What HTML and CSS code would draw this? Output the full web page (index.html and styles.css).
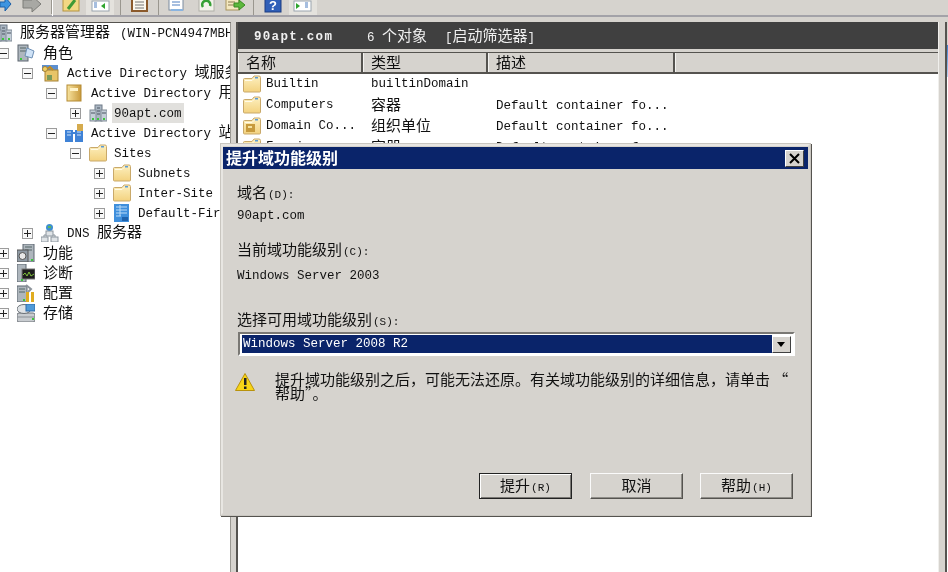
FILE: index.html
```html
<!DOCTYPE html>
<html lang="zh">
<head>
<meta charset="utf-8">
<title>服务器管理器</title>
<link rel="stylesheet" href="styles.css">
</head>
<body>
<svg class="defs" width="0" height="0" aria-hidden="true">
  <defs>
    <linearGradient id="fy" x1="0" y1="0" x2="0" y2="1"><stop offset="0" stop-color="#fdf0c0"/><stop offset="1" stop-color="#f3d27f"/></linearGradient>
    <linearGradient id="bk" x1="0" y1="0" x2="1" y2="0"><stop offset="0" stop-color="#f8e4a0"/><stop offset="1" stop-color="#c99a3c"/></linearGradient>
    <symbol id="folder" viewBox="0 0 18 18"><path d="M.5 4.500q0-1 1-1h7.500l2-2.500h5q1.500 0 1.500 1.500v13.500q0 1-1 1h-15q-1 0-1-1z" fill="url(#fy)" stroke="#c9a96a"/><path d="M2 5.500h7l2-2" fill="none" stroke="#fffbe8"/><rect x="12" y="2" width="3" height="1.500" fill="#5b9bd5"/></symbol>
    <symbol id="ou" viewBox="0 0 18 18"><use href="#folder"/><rect x="3" y="7" width="9" height="8" fill="#c79a3c"/><rect x="5" y="9" width="4" height="2" fill="#f5e3a0"/></symbol>
    <symbol id="server" viewBox="0 0 18 18"><rect x="6" y="1" width="7" height="16" fill="#aab6c2" stroke="#6f7b88"/><rect x="1" y="6" width="6" height="11" fill="#c4ced8" stroke="#808b96"/><rect x="12" y="6" width="6" height="11" fill="#c4ced8" stroke="#808b96"/><path d="M8 4h3M8 7h3M8 10h3M2 9h4M13 9h4" stroke="#4a5560"/><rect x="3" y="14" width="2" height="2" fill="#3cc63c"/><rect x="14" y="14" width="2" height="2" fill="#3cc63c"/><rect x="8" y="14" width="2" height="2" fill="#3cc63c"/></symbol>
    <symbol id="roles" viewBox="0 0 18 18"><rect x="1" y="1" width="10" height="16" fill="#aeb6bd" stroke="#5c6670"/><path d="M3 4h6M3 7h6" stroke="#566"/><rect x="3" y="14" width="2" height="2" fill="#3cc63c"/><path d="M10 4l7 3-2 7-7-2z" fill="#cfe2f6" stroke="#6d8fb5"/></symbol>
    <symbol id="adds" viewBox="0 0 18 18"><rect x="1" y="1" width="16" height="6" fill="#5c8fd0"/><rect x="4" y="6" width="13" height="11" fill="#e8c468" stroke="#a58234"/><path d="M3 7l6-4 3 3" fill="none" stroke="#c08a20" stroke-width="2"/><circle cx="4" cy="5" r="2.500" fill="#f2cf63" stroke="#a58234"/><rect x="6" y="11" width="5" height="5" fill="#7a9a5a"/></symbol>
    <symbol id="book" viewBox="0 0 18 18"><rect x="2" y="1" width="14" height="16" fill="url(#bk)" stroke="#b48a32"/><rect x="5" y="4" width="8" height="3" fill="#fff3c8"/></symbol>
    <symbol id="sites" viewBox="0 0 18 18"><rect x="0" y="6" width="8" height="12" fill="#3f82d6"/><rect x="10" y="6" width="8" height="12" fill="#3f82d6"/><path d="M2 8h4M2 11h4M12 8h4M12 11h4" stroke="#cfe3fa"/><path d="M8 9h2" stroke="#3f82d6" stroke-width="2"/><rect x="12" y="0" width="6" height="7" fill="#d5ab4e"/></symbol>
    <symbol id="bldg" viewBox="0 0 18 18"><rect x="1" y="0" width="15" height="18" fill="#3f8fdc"/><path d="M3 3h11M3 6h11M3 9h11M3 12h5" stroke="#bcdcf8"/><path d="M7 1v11" stroke="#bcdcf8"/><rect x="9" y="13" width="6" height="4" fill="#1f62ac"/></symbol>
    <symbol id="dns" viewBox="0 0 18 18"><circle cx="8.500" cy="3.500" r="3.500" fill="#3f8fd0"/><path d="M7 2h3v2H7z" fill="#5cb85c"/><path d="M8.500 7v4M3 13v-2h11v2" fill="none" stroke="#8b959e"/><rect x="5" y="7" width="7" height="5" fill="#dfe3e6" stroke="#8b959e"/><rect x="0" y="13" width="7" height="5" fill="#dfe3e6" stroke="#8b959e"/><rect x="10" y="13" width="7" height="5" fill="#dfe3e6" stroke="#8b959e"/></symbol>
    <symbol id="feat" viewBox="0 0 18 18"><rect x="6" y="0" width="11" height="18" fill="#aeb6bd" stroke="#5c6670"/><path d="M8 3h7M8 6h7" stroke="#566"/><rect x="0" y="6" width="11" height="12" fill="#8f9aa4" stroke="#555"/><circle cx="5.500" cy="12" r="3.500" fill="#e8e8e8" stroke="#555"/><rect x="14" y="15" width="2" height="2" fill="#3cc63c"/></symbol>
    <symbol id="diag" viewBox="0 0 18 18"><rect x="0" y="0" width="9" height="18" fill="#aeb6bd" stroke="#5c6670"/><rect x="5" y="5" width="13" height="10" fill="#1d1d1d" stroke="#777"/><path d="M6 11l2-2 2 3 2-4 2 4 3-2" fill="none" stroke="#7fc03c"/><rect x="4" y="15" width="2" height="2" fill="#3cc63c"/></symbol>
    <symbol id="conf" viewBox="0 0 18 18"><rect x="0" y="2" width="10" height="16" fill="#aeb6bd" stroke="#5c6670"/><path d="M2 5h6M2 8h6" stroke="#566"/><path d="M9 1l5 4-3 3" fill="none" stroke="#8e959c" stroke-width="2"/><rect x="9" y="8" width="3" height="10" fill="#e0ac20"/><rect x="14" y="8" width="3" height="10" fill="#e0ac20"/><rect x="6" y="15" width="2" height="2" fill="#3cc63c"/></symbol>
    <symbol id="stor" viewBox="0 0 18 18"><rect x="0" y="9" width="18" height="9" rx="2" fill="#c8ccd0" stroke="#6c7278"/><ellipse cx="7" cy="5" rx="7" ry="4.500" fill="#dfe3e6" stroke="#6c7278"/><rect x="9" y="0" width="9" height="7" fill="#4f9ad8" stroke="#2e6aa8"/><path d="M0 13h18" stroke="#8a9096"/><rect x="15" y="14" width="2" height="2" fill="#3cc63c"/></symbol>
  </defs>
</svg>

<div class="app">
  <div class="toolbar">
    <svg class="strip" width="330" height="16" viewBox="0 0 330 16" aria-hidden="true">
      <path d="M0 2h5V-3l6 7-6 7V7H0z" fill="#3d94e0" stroke="#1c5ea6"/>
      <path d="M23 0h9v-4l9 8-9 8V8h-9z" fill="#a8a8a4" stroke="#7c7c78"/>
      <path d="M52.500 0v16" stroke="#fff"/><path d="M51.500 0v14" stroke="#9a978f"/>
      <rect x="63" y="-2" width="16" height="13" fill="#f2d883" stroke="#b59440"/><path d="M68 9l7-9" stroke="#3f9a35" stroke-width="3"/>
      <rect x="86" y="0" width="28" height="15" fill="#e4e2dd"/><rect x="92" y="1" width="17" height="10" fill="#fff" stroke="#9aa4ae"/><path d="M105 3v6l-4-3z" fill="#2fa52f"/><path d="M94 3h3M94 5h3M94 7h3" stroke="#4f7fc0"/>
      <path d="M120.500 0v15" stroke="#9a978f"/>
      <rect x="132" y="-2" width="15" height="13" fill="#fbf8ee" stroke="#8b5a2b" stroke-width="2"/><path d="M135 2h9M135 5h9M135 8h9" stroke="#777"/>
      <path d="M158.500 0v15" stroke="#9a978f"/>
      <rect x="169" y="-2" width="14" height="12" fill="#fff" stroke="#7b8ca0"/><path d="M172 2h8M172 5h8" stroke="#4f7fc0"/><rect x="171" y="9" width="12" height="2" fill="#8ab4e0"/>
      <rect x="199" y="-1" width="15" height="12" fill="#f2f2ea" stroke="#b0b0a8"/><path d="M203 7a4 4 0 1 1 7-1" fill="none" stroke="#35a035" stroke-width="2.500"/>
      <rect x="226" y="-2" width="13" height="12" fill="#f4e8c0" stroke="#a8935c"/><path d="M228 2h7M228 5h7" stroke="#8a7a50"/><path d="M234 3h5V0l6 5-6 5V7h-5z" fill="#5cb83c" stroke="#3a8a24"/>
      <path d="M253.500 0v15" stroke="#9a978f"/>
      <rect x="265" y="-3" width="16" height="15" fill="#2f5fb8" stroke="#1c3c80"/><text class="help" x="273" y="10">?</text>
      <rect x="289" y="0" width="28" height="15" fill="#e4e2dd"/><rect x="294" y="1" width="17" height="10" fill="#fff" stroke="#9aa4ae"/><path d="M296 3v6l4-3z" fill="#2fa52f"/><path d="M305 3h3M305 5h3M305 7h3" stroke="#4f7fc0"/>
    </svg>
  </div>

  <div class="main">
    <nav class="tree">
      <div class="row root"><svg class="ico"><use href="#server"/></svg><span class="lbl"><span class="c">服务器管理器</span><span class="host">(WIN-PCN4947MBH)</span></span></div>
      <div class="row l0"><span class="exp"></span><svg class="ico"><use href="#roles"/></svg><span class="lbl c">角色</span></div>
      <div class="row l1"><span class="exp"></span><svg class="ico"><use href="#adds"/></svg><span class="lbl">Active Directory <span class="c">域服务</span></span></div>
      <div class="row l2"><span class="exp"></span><svg class="ico"><use href="#book"/></svg><span class="lbl">Active Directory <span class="c">用户和计算机</span></span></div>
      <div class="row l3"><span class="exp plus"></span><svg class="ico"><use href="#server"/></svg><span class="lbl sel">90apt.com</span></div>
      <div class="row l2"><span class="exp"></span><svg class="ico"><use href="#sites"/></svg><span class="lbl">Active Directory <span class="c">站点和服务</span></span></div>
      <div class="row l3"><span class="exp"></span><svg class="ico"><use href="#folder"/></svg><span class="lbl lat">Sites</span></div>
      <div class="row l4"><span class="exp plus"></span><svg class="ico"><use href="#folder"/></svg><span class="lbl lat">Subnets</span></div>
      <div class="row l4"><span class="exp plus"></span><svg class="ico"><use href="#folder"/></svg><span class="lbl lat">Inter-Site Transports</span></div>
      <div class="row l4"><span class="exp plus"></span><svg class="ico"><use href="#bldg"/></svg><span class="lbl lat">Default-First-Site-Name</span></div>
      <div class="row l1"><span class="exp plus"></span><svg class="ico"><use href="#dns"/></svg><span class="lbl">DNS <span class="c">服务器</span></span></div>
      <div class="row l0"><span class="exp plus"></span><svg class="ico"><use href="#feat"/></svg><span class="lbl c">功能</span></div>
      <div class="row l0"><span class="exp plus"></span><svg class="ico"><use href="#diag"/></svg><span class="lbl c">诊断</span></div>
      <div class="row l0"><span class="exp plus"></span><svg class="ico"><use href="#conf"/></svg><span class="lbl c">配置</span></div>
      <div class="row l0"><span class="exp plus"></span><svg class="ico"><use href="#stor"/></svg><span class="lbl c">存储</span></div>
    </nav>

    <section class="content">
      <header class="banner"><b class="bname">90apt.com</b><span class="bcount">6 <span class="c">个对象</span></span><span class="bfilter">[<span class="c">启动筛选器</span>]</span></header>
      <div class="cols">
        <div class="col w1 c">名称</div><div class="col w2 c">类型</div><div class="col w3 c">描述</div><div class="col rest"></div>
      </div>
      <div class="list">
        <div class="item"><div class="cell w1"><svg class="ico"><use href="#folder"/></svg>Builtin</div><div class="cell w2 t">builtinDomain</div><div class="cell w3 t"></div></div>
        <div class="item"><div class="cell w1"><svg class="ico"><use href="#folder"/></svg>Computers</div><div class="cell w2 t c">容器</div><div class="cell w3 t">Default container fo...</div></div>
        <div class="item"><div class="cell w1"><svg class="ico"><use href="#ou"/></svg>Domain Co...</div><div class="cell w2 t c">组织单位</div><div class="cell w3 t">Default container fo...</div></div>
        <div class="item"><div class="cell w1"><svg class="ico"><use href="#folder"/></svg>Foreign...</div><div class="cell w2 t c">容器</div><div class="cell w3 t">Default container fo...</div></div>
      </div>
    </section>
    <div class="far"></div>
  </div>

  <div class="dialog" role="dialog">
    <div class="titlebar"><span class="ttl">提升域功能级别</span><span class="close"><svg width="11" height="11" viewBox="0 0 11 11"><path d="M1 1l9 9M10 1l-9 9" stroke="#000" stroke-width="2"/></svg></span></div>
    <div class="dbody">
      <div class="lab"><span class="c">域名</span><span class="p">(D):</span></div>
      <div class="val v1">90apt.com</div>
      <div class="lab gap1"><span class="c">当前域功能级别</span><span class="p">(C):</span></div>
      <div class="val v2">Windows Server 2003</div>
      <div class="lab gap2"><span class="c">选择可用域功能级别</span><span class="p">(S):</span></div>
      <div class="select"><span class="seltext">Windows Server 2008 R2</span><span class="arrow"></span></div>
      <div class="warn">
        <svg class="wicon" width="22" height="20" viewBox="0 0 22 20"><path d="M11 1.500L20.500 18.500H1.500z" fill="#f7d417" stroke="#b8920c" stroke-linejoin="round"/><rect x="10" y="6" width="2.500" height="7" fill="#222"/><rect x="10" y="14.500" width="2.500" height="2.500" fill="#222"/></svg>
        <p class="wtext c">提升域功能级别之后，可能无法还原。有关域功能级别的详细信息，请单击 “<br>帮助”。</p>
      </div>
      <div class="btns">
        <button class="btn def"><span class="c">提升</span><span class="p">(R)</span></button>
        <button class="btn b2"><span class="c">取消</span></button>
        <button class="btn"><span class="c">帮助</span><span class="p">(H)</span></button>
      </div>
    </div>
  </div>
</div>
</body>
</html>
```
FILE: styles.css
```css
* { box-sizing: border-box; }
html, body { margin: 0; height: 100%; overflow: hidden; }
body {
  background: #fff;
  color: #111;
  font: 12.5px/20px "Liberation Mono", "Noto Sans CJK SC", monospace;
}
.defs { position: absolute; }
.c { font-family: "Noto Sans CJK SC", sans-serif; font-size: 15px; font-weight: 400; }
.p { font-size: 11px; margin-left: 1px; }

.app { position: relative; width: 948px; height: 572px; overflow: hidden; filter: blur(.35px); }

.toolbar { height: 17px; background: #d6d3ce; border-bottom: 2px solid #a3a2a8; }
.strip { display: block; }
.help { fill: #fff; font: bold 13px "Liberation Sans", sans-serif; text-anchor: middle; }

.main { display: flex; height: 555px; background: #d6d3ce; }

.tree {
  width: 231px;
  margin-top: 5px;
  background: #fff;
  border-top: 1px solid #55534f;
  border-right: 1px solid #9a9892;
  overflow: hidden;
  white-space: nowrap;
  flex: none;
}
.row { display: flex; align-items: center; height: 20px; }
.root { margin-left: -6px; }
.l0 { margin-left: -2px; }
.l1 { margin-left: 22px; }
.l2 { margin-left: 46px; }
.l3 { margin-left: 70px; }
.l4 { margin-left: 94px; }
.exp {
  flex: none;
  width: 11px;
  height: 11px;
  margin-right: 8px;
  border: 1px solid #9c9c9c;
  background: #f8f8f8 linear-gradient(#222, #222) center / 7px 1px no-repeat;
}
.exp.plus {
  background:
    linear-gradient(#222, #222) center / 7px 1px no-repeat,
    linear-gradient(#222, #222) center / 1px 7px no-repeat,
    #f8f8f8;
}
.ico { flex: none; width: 18px; height: 18px; }
.lbl { margin: 0 0 2px 8px; }
.l3 .lbl, .l4 .lbl { margin-left: 7px; }
.l3 .lat, .l4 .lat { margin-top: 2px; margin-bottom: 0; }
.host { margin-left: 10px; }
.l3 .sel { margin: 0 0 0 5px; padding: 0 2px; background: #e1e0dd; height: 20px; line-height: 22px; }

.content { flex: none; width: 703px; margin: 5px 0 0 5px; display: flex; flex-direction: column; border-left: 2px solid #55534f; border-right: 1px solid #f0efec; }
.banner {
  height: 27px;
  padding: 2px 0 0 16px;
  background: #404040;
  color: #f0f0f0;
  display: flex;
  align-items: center;
}
.banner .c { font-size: 15px; }
.bname { width: 113px; letter-spacing: 1.300px; font-size: 12.500px; }
.bcount { width: 78px; }
.bfilter { white-space: nowrap; }

.cols {
  display: flex;
  height: 22px;
  margin-top: 3px;
  background: #d6d3ce;
  border-top: 1px solid #55534f;
  border-bottom: 2px solid #55534f;
}
.col { height: 19px; line-height: 17px; padding-left: 7px; border-left: 1px solid #f4f3f0; border-right: 2px solid #55534f; }
.col.rest { flex: 1; border-right: 0; }
.w1 { width: 125px; flex: none; }
.w2 { width: 125px; flex: none; }
.w3 { width: 187px; flex: none; }

.list { flex: 1; background: #fff; }
.item { display: flex; height: 21px; align-items: flex-start; }
.cell { white-space: nowrap; overflow: hidden; height: 21px; line-height: 20px; }
.cell.c { line-height: 18px; }
.cell.w3 { line-height: 22px; }
.cell.w1 { display: flex; align-items: center; gap: 5px; padding-left: 5px; padding-bottom: 1px; }
.t { padding-left: 8px; }

.far {
  flex: 1;
  margin: 5px 0 0 6px;
  border-left: 2px solid #55534f;
  background: linear-gradient(#d6d3ce 23px, #3f7fd0 23px, #bcd6f2 55px, #fff 55px);
}

.dialog {
  position: absolute;
  left: 220px;
  top: 143px;
  width: 591px;
  height: 373px;
  background: #d6d3ce;
  border: 3px solid #d6d3ce;
  border-top-color: #e8e6e2;
  border-left-color: #e8e6e2;
  box-shadow: 1px 1px 0 #55534f;
  display: flex;
  flex-direction: column;
  outline: 1px solid #c9c6c0;
  outline-offset: -1px;
}
.titlebar {
  flex: none;
  height: 22px;
  margin-top: 1px;
  background: #0a246a;
  display: flex;
  align-items: center;
  justify-content: space-between;
  padding: 0 4px 0 3px;
}
.ttl { color: #fff; font: 700 16px/18px "Noto Sans CJK SC", sans-serif; white-space: nowrap; margin-bottom: 2px; }
.close {
  width: 19px;
  height: 17px;
  display: flex;
  align-items: center;
  justify-content: center;
  background: #d6d3ce;
  border: 1px solid;
  border-color: #fff #404040 #404040 #fff;
}
.dbody { flex: 1; display: flex; flex-direction: column; padding: 13px 14px 14px 14px; }
.lab { height: 20px; line-height: 20px; white-space: nowrap; }
.val { height: 20px; line-height: 20px; }
.v1 { margin-top: 4px; }
.v2 { margin-top: 7px; }
.gap1 { margin-top: 13px; }
.gap2 { margin-top: 23px; }
.select {
  display: flex;
  align-items: center;
  justify-content: space-between;
  height: 24px;
  margin: 3px 0 0 1px;
  width: 557px;
  padding: 2px;
  background: #fff;
  border: 2px solid;
  border-color: #7a7874 #fff #fff #7a7874;
}
.seltext { flex: 1; height: 18px; margin: -1px 0; background: #0a246a; color: #fff; line-height: 18px; padding-left: 1px; }
.arrow {
  flex: none;
  position: relative;
  width: 19px;
  height: 17px;
  background: #d6d3ce;
  border: 1px solid;
  border-color: #fff #404040 #404040 #fff;
}
.arrow::after {
  content: "";
  position: absolute;
  left: 4px;
  top: 5px;
  border: 4.500px solid transparent;
  border-top: 5px solid #000;
  border-bottom: 0;
}
.warn { display: flex; margin-top: 16px; }
.wicon { flex: none; margin: 0 19px 0 -3px; }
.wtext { margin: 0; font-size: 15px; line-height: 14px; white-space: nowrap; }
.btns { margin-top: auto; display: flex; justify-content: flex-end; gap: 17px; padding-right: 1px; }
.b2 { margin-left: 1px; }
.btn {
  width: 93px;
  height: 26px;
  padding: 0;
  color: #111;
  background: #d6d3ce;
  border: 1px solid;
  border-color: #fafafa #55534f #55534f #fafafa;
  box-shadow: inset -1px -1px 0 #8f8d88;
  font: inherit;
  line-height: 20px;
}
.btn.def { border-color: #222; box-shadow: inset 1px 1px 0 #fff, inset -1px -1px 0 #7a7874; }
```
